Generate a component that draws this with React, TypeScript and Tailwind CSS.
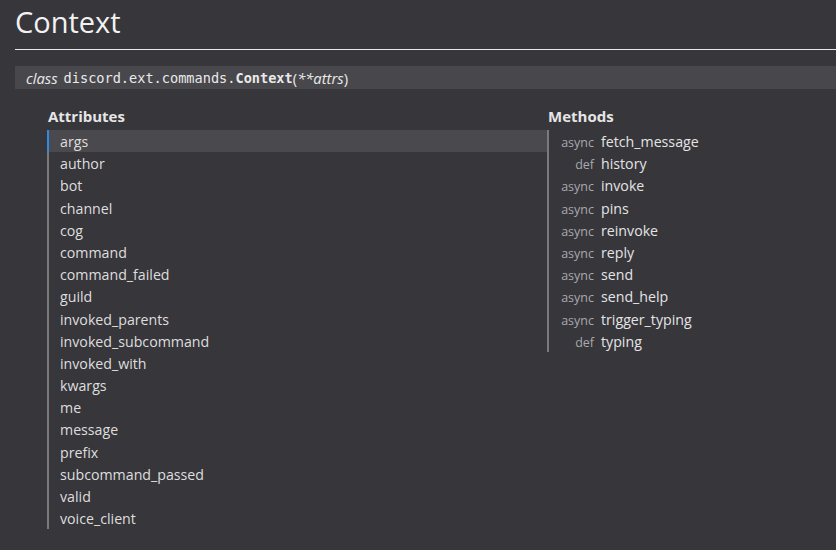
import React from "react";

const attrs = [
  "args",
  "author",
  "bot",
  "channel",
  "cog",
  "command",
  "command_failed",
  "guild",
  "invoked_parents",
  "invoked_subcommand",
  "invoked_with",
  "kwargs",
  "me",
  "message",
  "prefix",
  "subcommand_passed",
  "valid",
  "voice_client",
];

const methods: [string, string][] = [
  ["async", "fetch_message"],
  ["def", "history"],
  ["async", "invoke"],
  ["async", "pins"],
  ["async", "reinvoke"],
  ["async", "reply"],
  ["async", "send"],
  ["async", "send_help"],
  ["async", "trigger_typing"],
  ["def", "typing"],
];

export default function App() {
  return (
    <div
      className="w-full h-[550px] overflow-hidden bg-[#37363b] text-[#dedede] pl-[15px]"
      style={{ fontFamily: '"Open Sans", "Noto Sans", sans-serif' }}
    >
      <div className="h-[50px] border-b border-[#e8e8e8] flex items-center">
        <h1 className="text-[29px] leading-[44px] text-[#f2f2f2] font-normal -mt-[6px]">Context</h1>
      </div>
      <div className="mt-4 h-[23px] bg-[#48474c] pl-[11px] pt-[1px] flex items-center text-[14.8px] text-[#eaeaea] whitespace-nowrap">
        <em className="italic">class</em>
        <span className="ml-[6px] text-[13.6px]" style={{ fontFamily: '"DejaVu Sans Mono", "Liberation Mono", monospace' }}>
          discord.ext.commands.<span className="font-bold">Context</span>
        </span>
        <span>(</span>
        <em className="italic">**attrs</em>
        <span>)</span>
      </div>
      <div className="flex pl-[32px] mt-[17px]">
        <div className="w-[500px]">
          <div className="text-[15px] leading-[20px] font-bold text-[#e6e6e6] pl-[1px] mb-[4px]">Attributes</div>
          <div className="border-l-2 border-[#7a7a7a]">
            {attrs.map((a, i) => (
              <div
                key={a}
                className={
                  i === 0
                    ? "h-[22.2px] pt-[1px] leading-[21.2px] pl-[11px] text-[14.2px] bg-[#4a494e] border-l-2 border-[#2f8ae6] -ml-[2px]"
                    : "h-[22.2px] pt-[1px] leading-[21.2px] pl-[11px] text-[14.2px]"
                }
              >
                {a}
              </div>
            ))}
          </div>
        </div>
        <div className="w-[280px]">
          <div className="text-[15px] leading-[20px] font-bold text-[#e6e6e6] pl-[1px] mb-[4px]">Methods</div>
          <div className="border-l-2 border-[#7a7a7a]">
            {methods.map(([k, n]) => (
              <div key={n} className="h-[22.2px] pt-[1px] leading-[21.2px] pl-[11px] flex items-baseline whitespace-nowrap">
                <span className="w-[34px] text-right text-[12.5px] text-[#a9a9ad] mr-[7px]">{k}</span>
                <span className="text-[14.2px] text-[#e4e4e4]">{n}</span>
              </div>
            ))}
          </div>
        </div>
      </div>
    </div>
  );
}
